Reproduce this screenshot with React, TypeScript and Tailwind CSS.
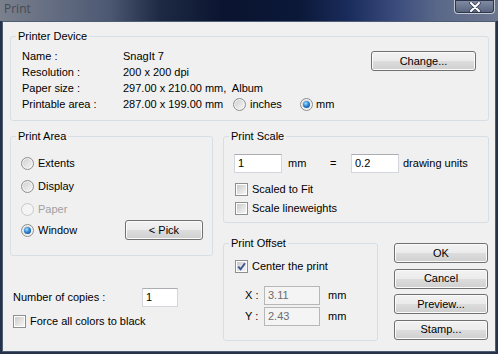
import React from 'react';

type Kids = { children?: React.ReactNode; className?: string };

// Win7 style radio button
const Radio = ({ checked = false, disabled = false }: { checked?: boolean; disabled?: boolean }) => (
  <span
    className={`w-[13px] h-[13px] shrink-0 rounded-full border flex items-center justify-center ${
      disabled
        ? 'border-[#c8c8c8] bg-[#f4f4f4]'
        : 'border-[#8e8f8f] bg-[linear-gradient(135deg,#cdcdcd,#f9f9f9)] shadow-[inset_0_0_0_1px_#f3f3f3]'
    }`}
  >
    {checked && (
      <span className="w-[7px] h-[7px] rounded-full bg-[radial-gradient(circle_at_40%_35%,#a6e2ff_0%,#2c84d4_45%,#0b3a75_100%)]" />
    )}
  </span>
);

// Win7 style checkbox
const Check = ({ checked = false }: { checked?: boolean }) => (
  <span className="w-[13px] h-[13px] shrink-0 border border-[#8e8f8f] bg-white p-[1px] flex">
    <span className="flex-1 flex bg-[linear-gradient(135deg,#cbcbcb,#f6f6f6)]">
      {checked && (
        <svg viewBox="0 0 9 9" className="w-full h-full">
          <path d="M1.2 4.6 L3.6 7.2 L8 1.2" fill="none" stroke="#3f5491" strokeWidth="1.9" />
        </svg>
      )}
    </span>
  </span>
);

const Btn = ({ children, className = '' }: Kids) => (
  <div
    className={`h-5 rounded-[3px] border border-[#707070] bg-[linear-gradient(#f2f2f2_0%,#ebebeb_50%,#dddddd_50%,#cfcfcf_100%)] shadow-[inset_0_0_0_1px_#fbfbfb] flex items-center justify-center ${className}`}
  >
    {children}
  </div>
);

const Field = ({ value, className = '', disabled = false }: { value: string; className?: string; disabled?: boolean }) => (
  <div
    className={`h-[19px] border flex items-center pl-[3px] ${
      disabled ? 'border-[#b7b7b7] bg-[#f4f4f4] text-[#6d6d6d]' : 'border-[#d3d7dd] border-t-[#abadb3] bg-white'
    } ${className}`}
  >
    {value}
  </div>
);

const Group = ({ title, children, className = '' }: Kids & { title: string }) => (
  <div className={`relative shrink-0 border border-[#d5dfe5] rounded-[3px] ${className}`}>
    <span className="absolute left-[5px] -top-[7px] px-[2px] bg-[#f0f0f0] leading-[13px]">{title}</span>
    {children}
  </div>
);

const info = [
  ['Name :', 'SnagIt 7'],
  ['Resolution :', '200 x 200 dpi'],
  ['Paper size :', '297.00 x 210.00 mm,\u00a0 Album'],
];

export default function App() {
  return (
    <div className="w-[498px] h-[354px] bg-[#26324a] flex flex-col overflow-hidden font-['Liberation_Sans',Arial,sans-serif] text-[11px] text-black">
      {/* title bar */}
      <div className="h-[21px] shrink-0 flex items-start bg-[linear-gradient(90deg,#7a808c_0%,#656e82_10%,#4c5872_22%,#1e2a44_32%,#0a1430_45%,#0b1838_60%,#1a2c5c_70%,#3d4e7e_80%,#5a6888_88%,#6b7590_100%)]">
        <span className="ml-[4px] mt-[1px] font-['Open_Sans',sans-serif] text-[12px] leading-[16px] text-[#464a52]">Print</span>
        <div className="ml-auto mr-[3px] w-[41px] h-[14px] rounded-b-[4px] border border-t-0 border-[#c3c8d3] bg-[linear-gradient(#838da4,#56617d)] shadow-[inset_0_0_0_1px_#2c3549] flex items-center justify-center">
          <svg viewBox="0 0 12 10" className="w-[12px] h-[10px]">
            <path d="M2 1 L10 9 M10 1 L2 9" stroke="#3a4258" strokeWidth="3.6" strokeLinecap="round" />
            <path d="M2 1 L10 9 M10 1 L2 9" stroke="#ffffff" strokeWidth="2" strokeLinecap="round" />
          </svg>
        </div>
      </div>

      {/* client area */}
      <div className="mx-[2px] h-[331px] shrink-0 border border-[#4f5d72] bg-[#f0f0f0] pl-[7px] pt-[14px] flex flex-col">
        <Group title="Printer Device" className="w-[479px] h-[85px] flex pl-[11px] pt-[11px] pr-[12px]">
          <div className="flex flex-col">
            {info.map(([k, v]) => (
              <div key={k} className="h-4 flex items-center">
                <span className="w-[101px]">{k}</span>
                <span>{v}</span>
              </div>
            ))}
            <div className="h-4 flex items-center">
              <span className="w-[101px]">Printable area :</span>
              <span className="w-[110px]">287.00 x 199.00 mm</span>
              <span className="w-[67px] flex items-center gap-[4px]">
                <Radio />
                inches
              </span>
              <span className="flex items-center gap-[3px]">
                <Radio checked />
                mm
              </span>
            </div>
          </div>
          <Btn className="ml-auto mt-[3px] w-[105px]">Change...</Btn>
        </Group>

        <div className="mt-[15px] flex gap-[10px]">
          {/* left column */}
          <div className="w-[203px] flex flex-col">
            <Group title="Print Area" className="h-[120px] pl-[10px] pr-[9px] pt-[15px] flex flex-col">
              <div className="h-[23px] flex items-center gap-[4px]">
                <Radio />
                Extents
              </div>
              <div className="h-[23px] flex items-center gap-[4px]">
                <Radio />
                Display
              </div>
              <div className="h-[22px] flex items-center gap-[4px] text-[#a0a0a0]">
                <Radio disabled />
                Paper
              </div>
              <div className="h-5 flex items-center gap-[4px]">
                <Radio checked />
                Window
                <Btn className="ml-auto w-[78px]">&lt; Pick</Btn>
              </div>
            </Group>

            <div className="mt-[32px] h-[19px] flex items-center pl-[3px]">
              <span className="w-[129px]">Number of copies :</span>
              <Field value="1" className="w-[36px]" />
            </div>
            <div className="mt-[8px] h-[13px] flex items-center gap-[4px] pl-[3px]">
              <Check />
              Force all colors to black
            </div>
          </div>

          {/* right column */}
          <div className="w-[266px] flex flex-col">
            <Group title="Print Scale" className="h-[87px] pl-[10px] pt-[16px] flex flex-col">
              <div className="h-5 flex items-center">
                <Field value="1" className="w-[48px] h-5" />
                <span className="w-[48px] pl-[6px]">mm</span>
                <span className="w-[21px]">=</span>
                <Field value="0.2" className="w-[48px] h-5" />
                <span className="ml-[4px]">drawing units</span>
              </div>
              <div className="mt-[10px] h-[13px] flex items-center gap-[4px] pl-[1px]">
                <Check />
                Scaled to Fit
              </div>
              <div className="mt-[6px] h-[13px] flex items-center gap-[4px] pl-[1px]">
                <Check />
                Scale lineweights
              </div>
            </Group>

            <div className="mt-[20px] flex">
              <Group title="Print Offset" className="w-[155px] h-[98px] pl-[11px] pt-[16px] flex flex-col">
                <div className="h-[13px] flex items-center gap-[4px]">
                  <Check checked />
                  Center the print
                </div>
                <div className="mt-[13px] h-[19px] flex items-center pl-[10px]">
                  <span className="w-[19px]">X :</span>
                  <Field value="3.11" disabled className="w-[56px]" />
                  <span className="ml-[8px]">mm</span>
                </div>
                <div className="mt-[2px] h-[19px] flex items-center pl-[10px]">
                  <span className="w-[19px]">Y :</span>
                  <Field value="2.43" disabled className="w-[56px]" />
                  <span className="ml-[8px]">mm</span>
                </div>
              </Group>

              <div className="ml-[16px] w-[94px] flex flex-col gap-[5.5px]">
                <Btn>OK</Btn>
                <Btn>Cancel</Btn>
                <Btn>Preview...</Btn>
                <Btn>Stamp...</Btn>
              </div>
            </div>
          </div>
        </div>
      </div>
    </div>
  );
}
